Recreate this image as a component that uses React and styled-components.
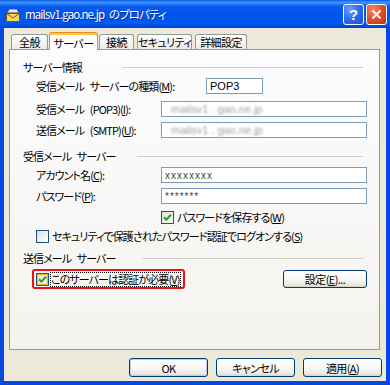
import styled, { createGlobalStyle } from "styled-components";

const GlobalStyle = createGlobalStyle`
  html, body {
    margin: 0;
    padding: 0;
    background: #ffffff;
  }
  body {
    font-family: "Noto Sans CJK JP", "Liberation Sans", sans-serif;
    font-size: 11px;
    color: #000;
  }
`;

const Window = styled.div`
  width: 390px;
  height: 385px;
  display: flex;
  flex-direction: column;
  background: #0846e0;
  overflow: hidden;
`;

const TitleBar = styled.div`
  height: 28px;
  flex: none;
  display: flex;
  align-items: center;
  padding: 0 3px 0 5px;
  background: linear-gradient(
    180deg,
    #0a5fe8 0%,
    #3d95ff 9%,
    #0a5aef 22%,
    #0055ea 50%,
    #005af2 84%,
    #0050e0 92%,
    #003dcb 100%
  );
`;

const Title = styled.span`
  flex: 1;
  margin-left: 4px;
  color: #fff;
  font-size: 11.5px;
  font-feature-settings: "palt";
  letter-spacing: -0.9px;
  word-spacing: 3px;
  text-shadow: 1px 1px 0 #0a2a9a;
  white-space: nowrap;
`;

const CaptionButton = styled.div`
  width: 21px;
  height: 21px;
  box-sizing: border-box;
  margin-left: 2px;
  border: 1px solid #fff;
  border-radius: 3px;
  display: flex;
  align-items: center;
  justify-content: center;
  color: #fff;
  font-family: "Liberation Sans", sans-serif;
  font-weight: bold;
  font-size: 15px;
  background: ${(p) =>
    p.$close
      ? "radial-gradient(circle at 30% 25%, #f08a6c 0%, #e0532f 45%, #c2300c 100%)"
      : "radial-gradient(circle at 30% 25%, #6fa0ff 0%, #2f6df3 45%, #1a4fd6 100%)"};
`;

const Body = styled.div`
  flex: 1;
  margin: 0 4px 4px;
  padding: 4px 4px 4px 5px;
  background: #ece9d8;
  display: flex;
  flex-direction: column;
`;

const TabRow = styled.div`
  display: flex;
  align-items: flex-end;
  gap: 3px;
  height: 17px;
  padding-left: 2px;
  position: relative;
  z-index: 1;
`;

const Tab = styled.div`
  width: ${(p) => p.$w}px;
  height: ${(p) => (p.$active ? 18 : 15)}px;
  box-sizing: border-box;
  margin: ${(p) => (p.$active ? "0 -2px -1px" : "0")};
  border: 1px solid #919b9c;
  border-bottom: none;
  border-top-color: ${(p) => (p.$active ? "#e68b2c" : "#919b9c")};
  border-radius: 3px 3px 0 0;
  background: ${(p) =>
    p.$active ? "#fcfcfe" : "linear-gradient(180deg, #ffffff 0%, #ecebe6 100%)"};
  box-shadow: ${(p) => (p.$active ? "inset 0 2px 0 #ffc83c" : "none")};
  display: flex;
  align-items: center;
  justify-content: center;
  padding-top: ${(p) => (p.$active ? 2 : 0)}px;
  font-size: 11px;
  font-feature-settings: "palt";
  letter-spacing: -0.6px;
  white-space: nowrap;
`;

const Panel = styled.div`
  width: 371px;
  height: 301px;
  box-sizing: border-box;
  border: 1px solid #919b9c;
  background: linear-gradient(180deg, #fcfcfe 0%, #f4f3ee 100%);
  padding: 9px 12px 0 13px;
  display: flex;
  flex-direction: column;
`;

const Section = styled.div`
  display: grid;
  grid-template-columns: ${(p) => p.$start}px 1fr;
  align-items: center;
  height: 14px;
  margin-top: ${(p) => p.$mt || 0}px;
  margin-right: 4px;
`;

const Label = styled.span`
  font-size: 11px;
  font-feature-settings: "palt";
  letter-spacing: -0.9px;
  word-spacing: 4px;
  white-space: nowrap;
`;

const Rule = styled.div`
  height: 1px;
  background: #d0d0c4;
`;

const FieldRow = styled.div`
  display: grid;
  grid-template-columns: ${(p) => p.$label || 125}px ${(p) =>
      p.$input ? `${p.$input}px` : "1fr"};
  align-items: center;
  height: 16px;
  margin-left: 13px;
  margin-top: ${(p) => p.$mt || 0}px;
`;

const TextBox = styled.div`
  height: 16px;
  box-sizing: border-box;
  border: 1px solid #7f9db9;
  background: #fff;
  padding: 0 3px;
  display: flex;
  align-items: center;
  font-family: "Liberation Sans", sans-serif;
  font-size: 11px;
  overflow: hidden;
`;

const Blurred = styled.span`
  color: #a0a0a0;
  filter: blur(0.9px);
  margin-left: 6px;
`;

const Masked = styled.span`
  color: #444;
  font-size: 10px;
  letter-spacing: 1px;
`;

const CheckRow = styled.div`
  display: flex;
  align-items: center;
  gap: 3px;
  height: 14px;
  margin-left: ${(p) => p.$indent}px;
  margin-top: ${(p) => p.$mt || 0}px;
`;

const Box = styled.div`
  width: 13px;
  height: 13px;
  flex: none;
  box-sizing: border-box;
  border: 1px solid #1c5180;
  background: linear-gradient(135deg, #dcdcd7 0%, #ffffff 100%);
  box-shadow: ${(p) =>
    p.$hot ? "inset 0 0 0 1px #f8b636, inset 0 0 0 2px #fedf9c" : "none"};
  display: flex;
  align-items: center;
  justify-content: center;
`;

const AuthRow = styled.div`
  display: flex;
  align-items: center;
  justify-content: space-between;
  height: 20px;
  margin-top: 5px;
  margin-left: 9px;
`;

const RedBox = styled.div`
  height: 20px;
  box-sizing: border-box;
  border: 2px solid #e8101a;
  border-radius: 3px;
  padding: 0 2px;
  width: 153px;
  display: flex;
  align-items: center;
  gap: 2px;
`;

const Focused = styled.span`
  font-size: 11px;
  font-feature-settings: "palt";
  letter-spacing: -0.9px;
  white-space: nowrap;
  outline: 1px dotted #000;
  line-height: 13px;
`;

const Button = styled.button`
  width: ${(p) => p.$w || 79}px;
  height: ${(p) => p.$h || 19}px;
  box-sizing: border-box;
  padding: 0;
  border: 1px solid #003c74;
  border-radius: 3px;
  background: linear-gradient(180deg, #ffffff 0%, #f6f6f2 55%, #e9e8e1 88%, #d6d0c5 100%);
  box-shadow: ${(p) => (p.$default ? "inset 0 0 0 1px #b9d0f5" : "none")};
  font-family: "Noto Sans CJK JP", "Liberation Sans", sans-serif;
  font-size: 11px;
  font-feature-settings: "palt";
  letter-spacing: -0.6px;
  color: #000;
  display: flex;
  align-items: center;
  justify-content: center;
`;

const ButtonRow = styled.div`
  display: flex;
  justify-content: flex-end;
  gap: 8px;
  margin-top: 8px;
`;

const Check = () => (
  <svg width="9" height="9" viewBox="0 0 9 9">
    <path d="M1 4.2 L3.4 6.6 L8 1.8" fill="none" stroke="#21a121" strokeWidth="2" />
  </svg>
);

const MailIcon = () => (
  <svg width="16" height="17" viewBox="0 0 16 17">
    <path d="M2 7 C2 2.5 14 2.5 14 7 Z" fill="#d8d8d8" stroke="#555" strokeWidth="1" />
    <rect x="4" y="3.5" width="8" height="2" fill="#f4f4f4" />
    <rect x="1.5" y="7.5" width="13" height="8" fill="#f6d860" stroke="#7a5a10" strokeWidth="1" />
    <path d="M1.5 7.5 L8 12 L14.5 7.5" fill="none" stroke="#7a5a10" strokeWidth="1" />
  </svg>
);

const CloseX = () => (
  <svg width="11" height="11" viewBox="0 0 11 11">
    <path d="M1.5 1.5 L9.5 9.5 M9.5 1.5 L1.5 9.5" stroke="#fff" strokeWidth="2" />
  </svg>
);

const App = () => {
  return (
    <>
      <GlobalStyle />
      <Window>
        <TitleBar>
          <MailIcon />
          <Title>mailsv1.gao.ne.jp のプロパティ</Title>
          <CaptionButton>?</CaptionButton>
          <CaptionButton $close>
            <CloseX />
          </CaptionButton>
        </TitleBar>
        <Body>
          <TabRow>
            <Tab $w={37}>全般</Tab>
            <Tab $w={49} $active>サーバー</Tab>
            <Tab $w={35}>接続</Tab>
            <Tab $w={55}>セキュリティ</Tab>
            <Tab $w={52}>詳細設定</Tab>
          </TabRow>
          <Panel>
            <Section $start={99}>
              <Label>サーバー情報</Label>
              <Rule />
            </Section>
            <FieldRow $label={170} $input={57} $mt={5}>
              <Label>
                受信メール サーバーの種類(<u>M</u>):
              </Label>
              <TextBox>POP3</TextBox>
            </FieldRow>
            <FieldRow $mt={7}>
              <Label>
                受信メール (POP3)(<u>I</u>):
              </Label>
              <TextBox>
                <Blurred>mailsv1 . gao.ne.jp</Blurred>
              </TextBox>
            </FieldRow>
            <FieldRow $mt={5}>
              <Label>
                送信メール (SMTP)(<u>U</u>):
              </Label>
              <TextBox>
                <Blurred>mailsv1 . gao.ne.jp</Blurred>
              </TextBox>
            </FieldRow>

            <Section $start={114} $mt={10}>
              <Label>受信メール サーバー</Label>
              <Rule />
            </Section>
            <FieldRow $mt={5}>
              <Label>
                アカウント名(<u>C</u>):
              </Label>
              <TextBox>
                <Masked>xxxxxxxx</Masked>
              </TextBox>
            </FieldRow>
            <FieldRow $mt={5}>
              <Label>
                パスワード(<u>P</u>):
              </Label>
              <TextBox>
                <Masked>*******</Masked>
              </TextBox>
            </FieldRow>
            <CheckRow $indent={138} $mt={6}>
              <Box>
                <Check />
              </Box>
              <Label>
                パスワードを保存する(<u>W</u>)
              </Label>
            </CheckRow>
            <CheckRow $indent={13} $mt={5}>
              <Box />
              <Label>
                セキュリティで保護されたパスワード認証でログオンする(<u>S</u>)
              </Label>
            </CheckRow>

            <Section $start={119} $mt={7}>
              <Label>送信メール サーバー</Label>
              <Rule />
            </Section>
            <AuthRow>
              <RedBox>
                <Box $hot>
                  <Check />
                </Box>
                <Focused>
                  このサーバーは認証が必要(<u>V</u>)
                </Focused>
              </RedBox>
              <Button $w={84} $h={18}>
                設定(<u>E</u>)...
              </Button>
            </AuthRow>
          </Panel>
          <ButtonRow>
            <Button $default>OK</Button>
            <Button>キャンセル</Button>
            <Button>
              適用(<u>A</u>)
            </Button>
          </ButtonRow>
        </Body>
      </Window>
    </>
  );
};

export default App;
